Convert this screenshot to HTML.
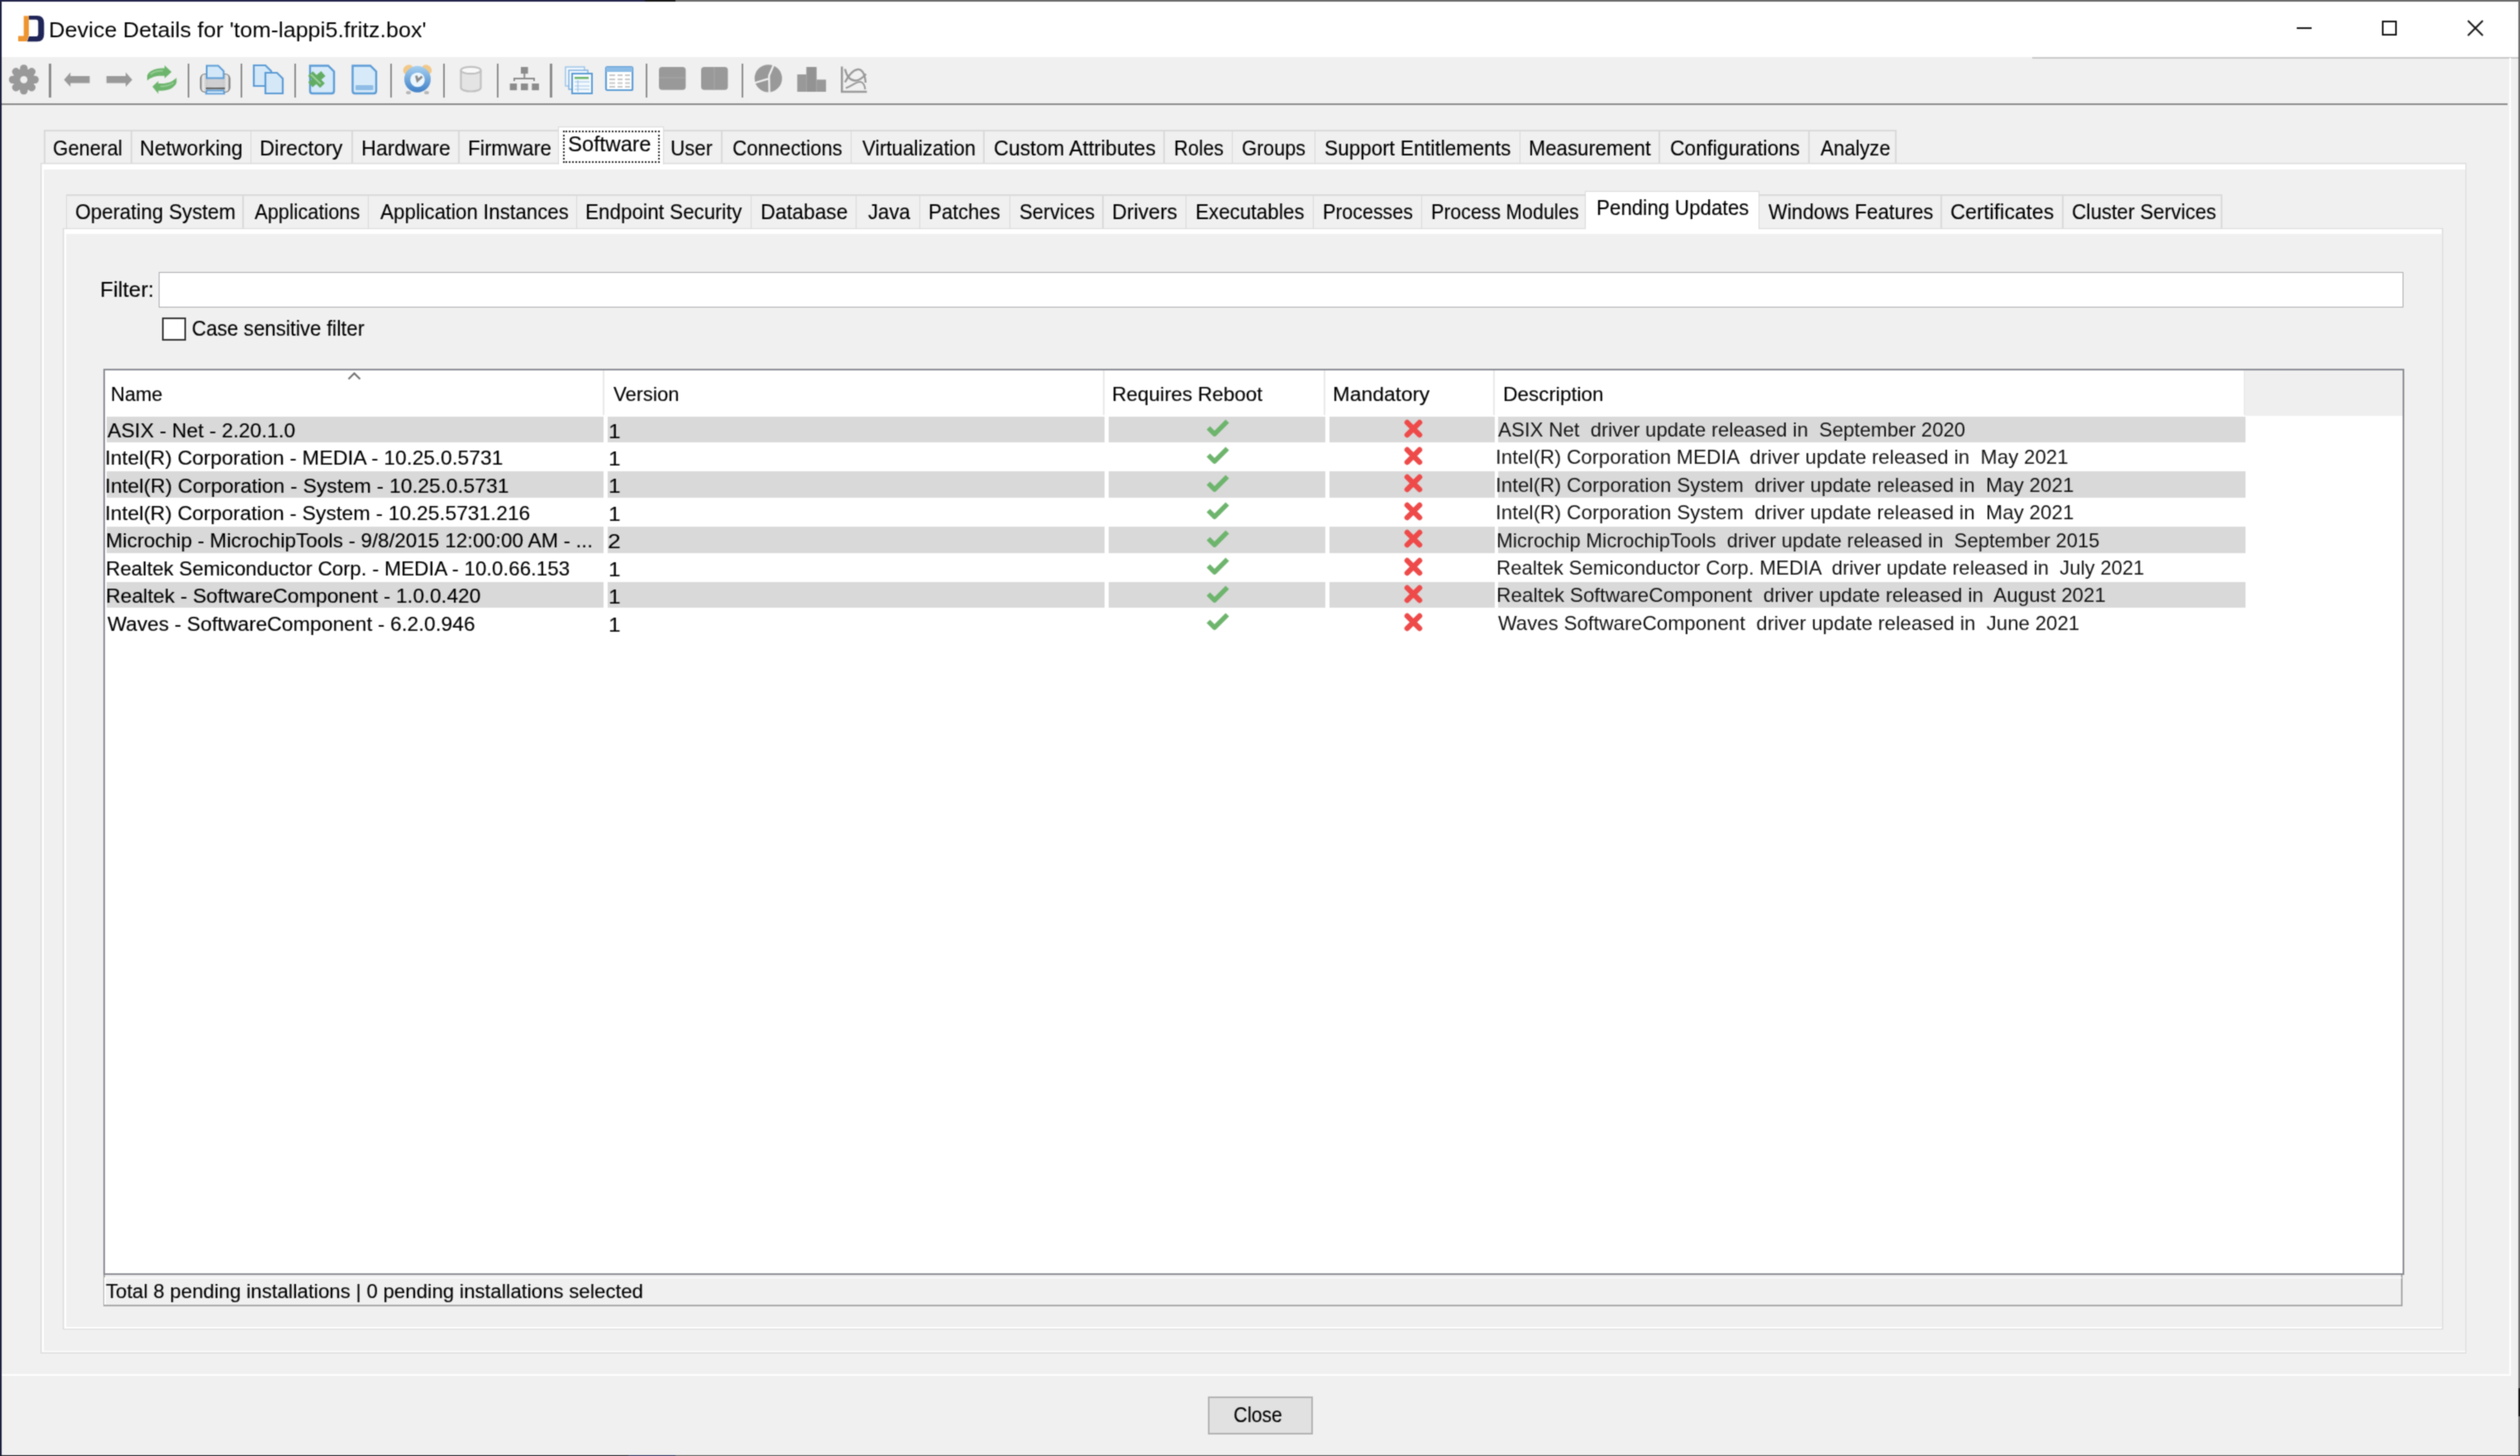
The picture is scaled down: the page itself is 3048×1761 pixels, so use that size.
<!DOCTYPE html>
<html><head><meta charset="utf-8"><style>
#w{position:absolute;left:0;top:0;width:3048px;height:1761px;overflow:hidden;filter:url(#sb)}
html,body{margin:0;padding:0;width:3048px;height:1761px;overflow:hidden;background:#f0f0f0}
.r{position:absolute;display:block}
.t{position:absolute;white-space:pre;font-family:"Liberation Sans",sans-serif;transform-origin:0 0;-webkit-text-stroke:0.15px currentColor}
.d{-webkit-text-stroke:0}
</style></head><body><svg width="0" height="0" style="position:absolute;left:0;top:0"><filter id="sb" x="0" y="0" width="100%" height="100%" color-interpolation-filters="sRGB"><feConvolveMatrix order="3" kernelMatrix="1 3 1 3 9 3 1 3 1" divisor="25" edgeMode="duplicate"/></filter></svg><div id="w">
<div class="r" style="left:0px;top:0px;width:3048px;height:1761px;background:#f0f0f0;"></div>
<div class="r" style="left:0px;top:0px;width:3048px;height:69px;background:#ffffff;"></div>
<svg class="r" style="left:20px;top:17px" width="36" height="36" viewBox="20 17 36 36">
<path d="M28.7 19.3 H34.9 V42.5 L32.6 50 H22 V43.5 H28.7 Z" fill="#ee9530"/>
<path d="M35 19.1 H45 Q53.3 19.1 53.3 28 V41.5 Q53.3 50.3 45 50.3 H32.9 L35 44.1 H43.5 Q46.2 44.1 46.2 41 V27 Q46.2 23.7 43.5 23.7 H35 Z" fill="#1f2557"/>
</svg>
<div class="t d" style="left:58.71px;top:22.87px;font-size:26.5px;line-height:26.5px;transform:scaleX(1.0168);color:#000;">Device Details for 'tom-lappi5.fritz.box'</div>
<div class="r" style="left:2778px;top:33px;width:18px;height:2px;background:#111;"></div>
<div class="r" style="left:2881px;top:25px;width:14px;height:14px;border:2px solid #111"></div>
<svg class="r" style="left:2983px;top:23px" width="22" height="22" viewBox="0 0 22 22"><path d="M2 2 L20 20 M20 2 L2 20" stroke="#111" stroke-width="2"/></svg>
<div class="r" style="left:2458px;top:69px;width:588px;height:1.5px;background:#c8c8c8;"></div>
<div class="r" style="left:2px;top:125px;width:3031px;height:2px;background:#8a8a8a;"></div>
<div class="r" style="left:3035px;top:70px;width:2px;height:1594px;background:#ffffff;"></div>
<div class="r" style="left:2px;top:1662px;width:3035px;height:2px;background:#ffffff;"></div>
<div class="r" style="left:0px;top:0px;width:2px;height:1761px;background:#1e2040;"></div>
<div class="r" style="left:0px;top:0px;width:780px;height:1.8px;background:#22244a;"></div>
<div class="r" style="left:780px;top:0px;width:37px;height:1.8px;background:#151515;"></div>
<div class="r" style="left:817px;top:0px;width:2231px;height:1.8px;background:#6a6a6a;"></div>
<div class="r" style="left:3046px;top:0px;width:2px;height:1761px;background:#6e6e6e;"></div>
<div class="r" style="left:3046px;top:1679px;width:2px;height:34px;background:#151515;"></div>
<div class="r" style="left:0px;top:1759.5px;width:760px;height:1.5px;background:#1c1c24;"></div>
<div class="r" style="left:760px;top:1759.5px;width:57px;height:1.5px;background:#2a2d5a;"></div>
<div class="r" style="left:817px;top:1759.5px;width:2231px;height:1.5px;background:#5a5a5a;"></div>
<div class="r" style="left:59.45px;top:76.5px;width:2.5px;height:41.5px;background:#8c8c8c;"></div>
<div class="r" style="left:226.55px;top:76.5px;width:2.5px;height:41.5px;background:#8c8c8c;"></div>
<div class="r" style="left:290.75px;top:76.5px;width:2.5px;height:41.5px;background:#8c8c8c;"></div>
<div class="r" style="left:355.75px;top:76.5px;width:2.5px;height:41.5px;background:#8c8c8c;"></div>
<div class="r" style="left:471.55px;top:76.5px;width:2.5px;height:41.5px;background:#8c8c8c;"></div>
<div class="r" style="left:535.85px;top:76.5px;width:2.5px;height:41.5px;background:#8c8c8c;"></div>
<div class="r" style="left:600.75px;top:76.5px;width:2.5px;height:41.5px;background:#8c8c8c;"></div>
<div class="r" style="left:665.25px;top:76.5px;width:2.5px;height:41.5px;background:#8c8c8c;"></div>
<div class="r" style="left:780.85px;top:76.5px;width:2.5px;height:41.5px;background:#8c8c8c;"></div>
<div class="r" style="left:896.65px;top:76.5px;width:2.5px;height:41.5px;background:#8c8c8c;"></div>
<svg class="r" style="left:10px;top:78px" width="38" height="38" viewBox="0 0 38 38"><g transform="translate(18.8,18.3)"><rect x="-4.6" y="-18" width="9.2" height="10" rx="4.2" transform="rotate(0)" fill="#999999"/><rect x="-4.6" y="-18" width="9.2" height="10" rx="4.2" transform="rotate(45)" fill="#999999"/><rect x="-4.6" y="-18" width="9.2" height="10" rx="4.2" transform="rotate(90)" fill="#999999"/><rect x="-4.6" y="-18" width="9.2" height="10" rx="4.2" transform="rotate(135)" fill="#999999"/><rect x="-4.6" y="-18" width="9.2" height="10" rx="4.2" transform="rotate(180)" fill="#999999"/><rect x="-4.6" y="-18" width="9.2" height="10" rx="4.2" transform="rotate(225)" fill="#999999"/><rect x="-4.6" y="-18" width="9.2" height="10" rx="4.2" transform="rotate(270)" fill="#999999"/><rect x="-4.6" y="-18" width="9.2" height="10" rx="4.2" transform="rotate(315)" fill="#999999"/><circle r="13.2" fill="#999999"/><circle r="4.4" fill="#f0f0f0"/></g></svg>
<svg class="r" style="left:76px;top:86px" width="34" height="21" viewBox="0 0 34 21"><path d="M1.4 10.4 L9.2 1.4 V6 H32.5 V14.5 H9.2 V19 Z" fill="#999999"/></svg>
<svg class="r" style="left:127px;top:86px" width="34" height="21" viewBox="0 0 34 21"><path d="M33 10.4 L25 1.4 V6 H1.8 V14.5 H25 V19 Z" fill="#999999"/></svg>
<svg class="r" style="left:172px;top:74px" width="50" height="44" viewBox="172 74 50 44">
<path d="M178 97.5 L178 91.5 C180 86 187 82.5 196 82.5 H199 V79 L207.5 87 L199 94.8 V91.8 H195 C188 91.8 183 93.5 178 97.5 Z" fill="#6db56d"/>
<path d="M213.5 94 L213.5 100 C211 106 204 109.8 195 109.8 H191.5 V113.5 L184.3 104.8 L191.5 98 V101 H196 C203 101 208 99 213.5 94 Z" fill="#6db56d"/>
<path d="M182 90 C185 87 190 85.5 197 85.5" stroke="#93cc93" stroke-width="1.8" fill="none"/>
<path d="M194 104.5 C201 104.5 206 103 210 100" stroke="#93cc93" stroke-width="1.8" fill="none"/>
</svg>
<svg class="r" style="left:236px;top:74px" width="50" height="44" viewBox="236 74 50 44">
<defs><linearGradient id="pg" x1="0" x2="1" y1="0" y2="0">
<stop offset="0" stop-color="#8a8a8a"/><stop offset="0.08" stop-color="#eeeeee"/><stop offset="0.2" stop-color="#c9c9c9"/>
<stop offset="0.5" stop-color="#dedede"/><stop offset="0.8" stop-color="#c9c9c9"/><stop offset="0.92" stop-color="#eeeeee"/><stop offset="1" stop-color="#6a6a6a"/></linearGradient></defs>
<rect x="242.5" y="89.5" width="35.5" height="22" rx="5.5" fill="url(#pg)" stroke="#777" stroke-width="1.2"/>
<rect x="252" y="96" width="17" height="9" fill="#cfcfd2"/>
<path d="M249 106.8 H272" stroke="#555" stroke-width="1.8"/>
<path d="M250 79.5 H264 L270.5 86 V94.5 H250 Z" fill="#d2e8f8" stroke="#5b9bd5" stroke-width="2"/>
<path d="M250 109.5 H270.5 L271.3 113.3 H249.2 Z" fill="#dcedfa" stroke="#5b9bd5" stroke-width="1.8"/>
</svg>
<svg class="r" style="left:305px;top:77px" width="40" height="39" viewBox="0 0 40 39">
<path d="M2 2 H16 L23 9 V27 H2 Z" fill="#d4e8f8" stroke="#5b9bd5" stroke-width="2.2"/>
<path d="M16 11 H30 L37 18 V36 H16 Z" fill="#d4e8f8" stroke="#5b9bd5" stroke-width="2.2"/>
</svg>
<svg class="r" style="left:366px;top:74px" width="46" height="44" viewBox="366 74 46 44">
<path d="M375 79.5 H397 L404 86.5 V110 Q404 113 401 113 H378 Q375 113 375 110 Z" fill="#d6eaf9" stroke="#5b9bd5" stroke-width="2.4"/>
<path d="M375.5 89 L390 103.5 M391 89 L375.5 102.5" stroke="#62ad62" stroke-width="8"/>
<path d="M376 90 L388 101.5" stroke="#9fd09f" stroke-width="2"/>
</svg>
<svg class="r" style="left:420px;top:74px" width="40" height="44" viewBox="420 74 40 44">
<path d="M426.5 79.5 H448 L455 86.5 V110 Q455 113 452 113 H429.5 Q426.5 113 426.5 110 Z" fill="#d6eaf9" stroke="#5b9bd5" stroke-width="2.4"/>
<rect x="430" y="103" width="21.5" height="6" rx="1" fill="#8fbde6"/>
</svg>
<svg class="r" style="left:482px;top:74px" width="46" height="44" viewBox="482 74 46 44">
<defs><linearGradient id="cg" x1="0" x2="0" y1="0" y2="1"><stop offset="0" stop-color="#a6d0f0"/><stop offset="1" stop-color="#3f7fc6"/></linearGradient></defs>
<ellipse cx="493.5" cy="84" rx="6.5" ry="5.2" fill="#f2c888" transform="rotate(-40 493.5 84)"/>
<ellipse cx="516.3" cy="84" rx="6.5" ry="5.2" fill="#f2c888" transform="rotate(40 516.3 84)"/>
<ellipse cx="494" cy="112" rx="3" ry="2" fill="#b8b8b8"/>
<ellipse cx="516" cy="112" rx="3" ry="2" fill="#b8b8b8"/>
<circle cx="505" cy="95.8" r="16" fill="url(#cg)"/>
<circle cx="505" cy="96.5" r="8.8" fill="#ecf7fd"/>
<path d="M503.5 91.5 L505 97.5 L510.5 92.5" stroke="#8a8a8a" stroke-width="3" fill="none"/>
</svg>
<svg class="r" style="left:555px;top:79px" width="30" height="35" viewBox="0 0 30 35">
<path d="M2.5 6 V27 C2.5 33 26.5 33 26.5 27 V6" fill="#e4e4e4" stroke="#c0c0c0" stroke-width="2.2"/>
<ellipse cx="14.5" cy="6" rx="12" ry="4.2" fill="#f8f8f8" stroke="#c0c0c0" stroke-width="2.2"/>
</svg>
<svg class="r" style="left:614px;top:79px" width="40" height="33" viewBox="0 0 40 33">
<rect x="16" y="2" width="8.6" height="8.1" fill="#8c8c8c"/>
<rect x="19.3" y="10" width="2" height="6" fill="#8c8c8c"/>
<rect x="7" y="15" width="26" height="2" fill="#8c8c8c"/>
<rect x="7" y="15" width="2" height="4" fill="#8c8c8c"/>
<rect x="31" y="15" width="2" height="4" fill="#8c8c8c"/>
<rect x="2.7" y="22" width="8.5" height="8.1" fill="#8c8c8c"/>
<rect x="16" y="22" width="8.6" height="8.1" fill="#8c8c8c"/>
<rect x="29.3" y="22" width="8.6" height="8.1" fill="#8c8c8c"/>
</svg>
<svg class="r" style="left:682px;top:79px" width="38" height="37" viewBox="0 0 38 37">
<rect x="2" y="2" width="23" height="23" fill="#f4f9fd" stroke="#9cc4e8" stroke-width="1.5"/>
<rect x="6" y="6" width="23" height="23" fill="#f4f9fd" stroke="#7fb0e0" stroke-width="1.5"/>
<rect x="10" y="10" width="24" height="24" fill="#f4f9fd" stroke="#5b9bd5" stroke-width="2"/>
<rect x="13" y="14" width="17" height="2.5" fill="#6ab46a"/>
<path d="M13 20 H31 M13 25 H31 M13 29 H31 M17 18 V32" stroke="#9cc4e8" stroke-width="1.2"/>
</svg>
<svg class="r" style="left:731px;top:79px" width="36" height="33" viewBox="0 0 36 33">
<rect x="2" y="2" width="32" height="28" rx="1.5" fill="#ffffff" stroke="#5b9bd5" stroke-width="2.2"/>
<rect x="2" y="2" width="32" height="6" fill="#8cbce6"/>
<path d="M6 12 H13 M16 12 H22 M25 12 H31 M6 17 H13 M16 17 H22 M25 17 H31 M6 21.5 H13 M16 21.5 H22 M25 21.5 H31 M6 26 H13 M16 26 H22 M25 26 H31" stroke="#c8c8c8" stroke-width="2"/>
</svg>
<svg class="r" style="left:796px;top:80px" width="35" height="30" viewBox="0 0 35 30"><rect x="1" y="1" width="32.4" height="27.7" rx="4" fill="#999999"/><path d="M1 14 H33" stroke="#a8a8a8" stroke-width="1"/></svg>
<svg class="r" style="left:847px;top:80px" width="35" height="30" viewBox="0 0 35 30"><rect x="1" y="1" width="32.4" height="27.7" rx="4" fill="#999999"/><path d="M17 1 V29" stroke="#a8a8a8" stroke-width="1"/></svg>
<svg class="r" style="left:906px;top:74px" width="46" height="44" viewBox="906 74 46 44">
<circle cx="929.3" cy="94.8" r="16.6" fill="#999999"/>
<path d="M936 78 L930.2 91.5 L930.6 112 M929 95.3 L912 100.5" stroke="#f0f0f0" stroke-width="2.3" fill="none"/>
</svg>
<svg class="r" style="left:962px;top:79px" width="40" height="34" viewBox="0 0 40 34">
<rect x="2.3" y="11" width="11" height="21" fill="#999999"/>
<rect x="13.3" y="2" width="12.4" height="30" fill="#939393"/>
<rect x="25.7" y="17.3" width="11.4" height="14.7" fill="#999999"/>
</svg>
<svg class="r" style="left:1010px;top:74px" width="46" height="44" viewBox="1010 74 46 44">
<path d="M1018.3 80.5 V111 H1048.5" stroke="#999999" stroke-width="2.6" fill="none"/>
<path d="M1022 83.5 C1024 92 1028 97 1034 97.5 C1040 98 1044 93 1047.5 89.5" stroke="#999999" stroke-width="2.4" fill="none"/>
<path d="M1022 99.5 C1026 92 1031 85 1037 84 C1042 83 1046 88 1047 100" stroke="#999999" stroke-width="2.4" fill="none"/>
<path d="M1023 106.5 C1030 104.5 1035 99 1040 99 C1044 99 1046 104 1046.5 108" stroke="#999999" stroke-width="2.2" fill="none"/>
</svg>
<div class="r" style="left:49px;top:197px;width:2934px;height:1439.5px;background:#f0f0f0;border:1.5px solid #d9d9d9;box-sizing:border-box"></div>
<div class="r" style="left:50.5px;top:198.5px;width:2931.0px;height:6.5px;background:#ffffff;"></div>
<div class="r" style="left:50.5px;top:198.5px;width:2.5px;height:1436.5px;background:#ffffff;"></div>
<div class="r" style="left:50.5px;top:1633.5px;width:2931.0px;height:1.5px;background:#ffffff;"></div>
<div class="r" style="left:54px;top:157px;width:2240px;height:1.5px;background:#d9d9d9;"></div>
<div class="r" style="left:53.25px;top:157px;width:1.5px;height:40px;background:#d9d9d9;"></div>
<div class="r" style="left:158.05px;top:157px;width:1.5px;height:40px;background:#d9d9d9;"></div>
<div class="r" style="left:302.75px;top:157px;width:1.5px;height:40px;background:#d9d9d9;"></div>
<div class="r" style="left:425.25px;top:157px;width:1.5px;height:40px;background:#d9d9d9;"></div>
<div class="r" style="left:554.25px;top:157px;width:1.5px;height:40px;background:#d9d9d9;"></div>
<div class="r" style="left:674.85px;top:157px;width:1.5px;height:40px;background:#d9d9d9;"></div>
<div class="r" style="left:801.25px;top:157px;width:1.5px;height:40px;background:#d9d9d9;"></div>
<div class="r" style="left:872.25px;top:157px;width:1.5px;height:40px;background:#d9d9d9;"></div>
<div class="r" style="left:1028.85px;top:157px;width:1.5px;height:40px;background:#d9d9d9;"></div>
<div class="r" style="left:1189.25px;top:157px;width:1.5px;height:40px;background:#d9d9d9;"></div>
<div class="r" style="left:1407.25px;top:157px;width:1.5px;height:40px;background:#d9d9d9;"></div>
<div class="r" style="left:1489.65px;top:157px;width:1.5px;height:40px;background:#d9d9d9;"></div>
<div class="r" style="left:1589.65px;top:157px;width:1.5px;height:40px;background:#d9d9d9;"></div>
<div class="r" style="left:1837.85px;top:157px;width:1.5px;height:40px;background:#d9d9d9;"></div>
<div class="r" style="left:2006.25px;top:157px;width:1.5px;height:40px;background:#d9d9d9;"></div>
<div class="r" style="left:2187.25px;top:157px;width:1.5px;height:40px;background:#d9d9d9;"></div>
<div class="r" style="left:2292.25px;top:157px;width:1.5px;height:40px;background:#d9d9d9;"></div>
<div class="r" style="left:675px;top:152.5px;width:128px;height:46.0px;background:#ffffff;border:1.5px solid #d9d9d9;border-bottom:none;box-sizing:border-box"></div>
<div class="r" style="left:676.5px;top:197px;width:125.0px;height:8px;background:#ffffff;"></div>
<div class="r" style="left:680.5px;top:158px;width:117px;height:38.5px;border:2px dotted #222;box-sizing:border-box"></div>
<div class="t" style="left:63.86px;top:166.09px;font-size:26px;line-height:26px;transform:scaleX(0.9095);color:#000;">General</div>
<div class="t" style="left:169.08px;top:166.09px;font-size:26px;line-height:26px;transform:scaleX(0.9584);color:#000;">Networking</div>
<div class="t" style="left:314.27px;top:166.09px;font-size:26px;line-height:26px;transform:scaleX(0.9647);color:#000;">Directory</div>
<div class="t" style="left:436.79px;top:166.09px;font-size:26px;line-height:26px;transform:scaleX(0.9571);color:#000;">Hardware</div>
<div class="t" style="left:565.74px;top:166.09px;font-size:26px;line-height:26px;transform:scaleX(0.9321);color:#000;">Firmware</div>
<div class="t" style="left:810.65px;top:166.09px;font-size:26px;line-height:26px;transform:scaleX(0.9238);color:#000;">User</div>
<div class="t" style="left:885.85px;top:166.09px;font-size:26px;line-height:26px;transform:scaleX(0.9188);color:#000;">Connections</div>
<div class="t" style="left:1042.77px;top:166.09px;font-size:26px;line-height:26px;transform:scaleX(0.9242);color:#000;">Virtualization</div>
<div class="t" style="left:1201.81px;top:166.09px;font-size:26px;line-height:26px;transform:scaleX(0.9542);color:#000;">Custom Attributes</div>
<div class="t" style="left:1419.60px;top:166.09px;font-size:26px;line-height:26px;transform:scaleX(0.9008);color:#000;">Roles</div>
<div class="t" style="left:1502.47px;top:166.09px;font-size:26px;line-height:26px;transform:scaleX(0.9036);color:#000;">Groups</div>
<div class="t" style="left:1602.43px;top:166.09px;font-size:26px;line-height:26px;transform:scaleX(0.9339);color:#000;">Support Entitlements</div>
<div class="t" style="left:1848.84px;top:166.09px;font-size:26px;line-height:26px;transform:scaleX(0.9295);color:#000;">Measurement</div>
<div class="t" style="left:2019.53px;top:166.09px;font-size:26px;line-height:26px;transform:scaleX(0.9366);color:#000;">Configurations</div>
<div class="t" style="left:2201.80px;top:166.09px;font-size:26px;line-height:26px;transform:scaleX(0.9118);color:#000;">Analyze</div>
<div class="t" style="left:687.28px;top:161.09px;font-size:26px;line-height:26px;transform:scaleX(0.9796);color:#000;">Software</div>
<div class="r" style="left:76px;top:275.5px;width:2878.5px;height:1332.5px;background:#f0f0f0;border:1.5px solid #d9d9d9;box-sizing:border-box"></div>
<div class="r" style="left:77.5px;top:277px;width:2875.5px;height:6px;background:#ffffff;"></div>
<div class="r" style="left:77.5px;top:277px;width:2.299999999999997px;height:1329.5px;background:#ffffff;"></div>
<div class="r" style="left:77.5px;top:1604.5px;width:2875.5px;height:2.0px;background:#ffffff;"></div>
<div class="r" style="left:80.7px;top:235px;width:2607.3px;height:1.5px;background:#d9d9d9;"></div>
<div class="r" style="left:79.95px;top:235px;width:1.5px;height:40.5px;background:#d9d9d9;"></div>
<div class="r" style="left:293.25px;top:235px;width:1.5px;height:40.5px;background:#d9d9d9;"></div>
<div class="r" style="left:444.95px;top:235px;width:1.5px;height:40.5px;background:#d9d9d9;"></div>
<div class="r" style="left:696.75px;top:235px;width:1.5px;height:40.5px;background:#d9d9d9;"></div>
<div class="r" style="left:907.75px;top:235px;width:1.5px;height:40.5px;background:#d9d9d9;"></div>
<div class="r" style="left:1034.95px;top:235px;width:1.5px;height:40.5px;background:#d9d9d9;"></div>
<div class="r" style="left:1111.75px;top:235px;width:1.5px;height:40.5px;background:#d9d9d9;"></div>
<div class="r" style="left:1220.65px;top:235px;width:1.5px;height:40.5px;background:#d9d9d9;"></div>
<div class="r" style="left:1333.25px;top:235px;width:1.5px;height:40.5px;background:#d9d9d9;"></div>
<div class="r" style="left:1433.85px;top:235px;width:1.5px;height:40.5px;background:#d9d9d9;"></div>
<div class="r" style="left:1587.85px;top:235px;width:1.5px;height:40.5px;background:#d9d9d9;"></div>
<div class="r" style="left:1718.95px;top:235px;width:1.5px;height:40.5px;background:#d9d9d9;"></div>
<div class="r" style="left:1917.25px;top:235px;width:1.5px;height:40.5px;background:#d9d9d9;"></div>
<div class="r" style="left:2126.75px;top:235px;width:1.5px;height:40.5px;background:#d9d9d9;"></div>
<div class="r" style="left:2347.25px;top:235px;width:1.5px;height:40.5px;background:#d9d9d9;"></div>
<div class="r" style="left:2494.05px;top:235px;width:1.5px;height:40.5px;background:#d9d9d9;"></div>
<div class="r" style="left:2686.25px;top:235px;width:1.5px;height:40.5px;background:#d9d9d9;"></div>
<div class="r" style="left:1917.2px;top:230.5px;width:211.29999999999995px;height:46.5px;background:#ffffff;border:1.8px solid #d9d9d9;border-bottom:none;box-sizing:border-box"></div>
<div class="r" style="left:1919px;top:275px;width:207.69999999999982px;height:8px;background:#ffffff;"></div>
<div class="t" style="left:90.81px;top:243.71px;font-size:25.5px;line-height:25.5px;transform:scaleX(0.9502);color:#000;">Operating System</div>
<div class="t" style="left:308.00px;top:243.71px;font-size:25.5px;line-height:25.5px;transform:scaleX(0.9253);color:#000;">Applications</div>
<div class="t" style="left:460.00px;top:243.71px;font-size:25.5px;line-height:25.5px;transform:scaleX(0.9450);color:#000;">Application Instances</div>
<div class="t" style="left:708.11px;top:243.71px;font-size:25.5px;line-height:25.5px;transform:scaleX(0.9470);color:#000;">Endpoint Security</div>
<div class="t" style="left:920.07px;top:243.71px;font-size:25.5px;line-height:25.5px;transform:scaleX(0.9651);color:#000;">Database</div>
<div class="t" style="left:1049.53px;top:243.71px;font-size:25.5px;line-height:25.5px;transform:scaleX(0.9477);color:#000;">Java</div>
<div class="t" style="left:1123.12px;top:243.71px;font-size:25.5px;line-height:25.5px;transform:scaleX(0.9412);color:#000;">Patches</div>
<div class="t" style="left:1232.84px;top:243.71px;font-size:25.5px;line-height:25.5px;transform:scaleX(0.9319);color:#000;">Services</div>
<div class="t" style="left:1345.05px;top:243.71px;font-size:25.5px;line-height:25.5px;transform:scaleX(0.9775);color:#000;">Drivers</div>
<div class="t" style="left:1446.11px;top:243.71px;font-size:25.5px;line-height:25.5px;transform:scaleX(0.9471);color:#000;">Executables</div>
<div class="t" style="left:1599.97px;top:243.71px;font-size:25.5px;line-height:25.5px;transform:scaleX(0.9147);color:#000;">Processes</div>
<div class="t" style="left:1730.67px;top:243.71px;font-size:25.5px;line-height:25.5px;transform:scaleX(0.9132);color:#000;">Process Modules</div>
<div class="t" style="left:2138.50px;top:243.71px;font-size:25.5px;line-height:25.5px;transform:scaleX(0.9441);color:#000;">Windows Features</div>
<div class="t" style="left:2359.47px;top:243.71px;font-size:25.5px;line-height:25.5px;transform:scaleX(0.9820);color:#000;">Certificates</div>
<div class="t" style="left:2506.32px;top:243.71px;font-size:25.5px;line-height:25.5px;transform:scaleX(0.9401);color:#000;">Cluster Services</div>
<div class="t" style="left:1930.82px;top:239.11px;font-size:25.5px;line-height:25.5px;transform:scaleX(0.9422);color:#000;">Pending Updates</div>
<div class="t" style="left:121.29px;top:337.19px;font-size:26px;line-height:26px;transform:scaleX(1.0058);color:#000;">Filter:</div>
<div class="r" style="left:191.5px;top:328.5px;width:2715.5px;height:43.0px;background:#ffffff;border:1.6px solid #a9a9ae;box-sizing:border-box"></div>
<div class="r" style="left:195.5px;top:383.5px;width:29.0px;height:28.5px;background:#ffffff;border:2.2px solid #333;box-sizing:border-box"></div>
<div class="t" style="left:231.74px;top:383.99px;font-size:26px;line-height:26px;transform:scaleX(0.9256);color:#000;">Case sensitive filter</div>
<div class="r" style="left:124.5px;top:446px;width:2783.0px;height:1096.2px;background:#ffffff;border:2px solid #8a8c94;box-sizing:border-box"></div>
<div class="r" style="left:2714.5px;top:448px;width:191.0px;height:54.5px;background:#efeff0;"></div>
<div class="r" style="left:728.6px;top:448px;width:2.0px;height:54px;background:#e8e8e8;"></div>
<div class="r" style="left:1333.7px;top:448px;width:2.0px;height:54px;background:#e8e8e8;"></div>
<div class="r" style="left:1601px;top:448px;width:2px;height:54px;background:#e8e8e8;"></div>
<div class="r" style="left:1806.2px;top:448px;width:2.0px;height:54px;background:#e8e8e8;"></div>
<div class="r" style="left:2713.5px;top:448px;width:1.0px;height:54px;background:#e4e4e4;"></div>
<svg class="r" style="left:417px;top:448px" width="24" height="16" viewBox="0 0 24 16"><path d="M4.5 10.5 L11.5 3.5 L18.5 10.5" stroke="#707070" stroke-width="2.2" fill="none"/></svg>
<div class="t" style="left:134.49px;top:465.06px;font-size:24.5px;line-height:24.5px;transform:scaleX(0.9574);color:#000;">Name</div>
<div class="t" style="left:742.26px;top:465.06px;font-size:24.5px;line-height:24.5px;transform:scaleX(0.9718);color:#000;">Version</div>
<div class="t" style="left:1345.22px;top:465.26px;font-size:24.5px;line-height:24.5px;transform:scaleX(0.9904);color:#000;">Requires Reboot</div>
<div class="t" style="left:1612.48px;top:465.26px;font-size:24.5px;line-height:24.5px;transform:scaleX(1.0119);color:#000;">Mandatory</div>
<div class="t" style="left:1817.52px;top:465.26px;font-size:24.5px;line-height:24.5px;transform:scaleX(0.9924);color:#000;">Description</div>
<div class="r" style="left:129.3px;top:503.5px;width:600.7px;height:31.299999999999955px;background:#d9d9d9;"></div>
<div class="r" style="left:734.5px;top:503.5px;width:601.2px;height:31.299999999999955px;background:#d9d9d9;"></div>
<div class="r" style="left:1340.7px;top:503.5px;width:262.29999999999995px;height:31.299999999999955px;background:#d9d9d9;"></div>
<div class="r" style="left:1607.5px;top:503.5px;width:200.0999999999999px;height:31.299999999999955px;background:#d9d9d9;"></div>
<div class="r" style="left:1812px;top:503.5px;width:904.4000000000001px;height:31.299999999999955px;background:#d9d9d9;"></div>
<div class="t" style="left:129.70px;top:508.76px;font-size:24.5px;line-height:24.5px;transform:scaleX(1.0055);color:#000;">ASIX - Net - 2.20.1.0</div>
<div class="t" style="left:736.43px;top:509.56px;font-size:24.5px;line-height:24.5px;transform:scaleX(1.0698);color:#000;">1</div>
<svg class="r" style="left:1459px;top:506.0px" width="28" height="22" viewBox="0 0 28 22"><path d="M2.5 11.5 L10 19 L25.5 3.5" stroke="#6db46d" stroke-width="5.8" fill="none" stroke-linejoin="round"/></svg>
<svg class="r" style="left:1697.5px;top:506.5px" width="23" height="23" viewBox="0 0 23 23"><path d="M4 4 L19 19 M19 4 L4 19" stroke="#ee4a4a" stroke-width="6.5" stroke-linecap="round" fill="none"/></svg>
<div class="t d" style="left:1811.70px;top:507.88px;font-size:24px;line-height:24px;transform:scaleX(0.9966);color:#141414;">ASIX Net  driver update released in  September 2020</div>
<div class="t" style="left:127.43px;top:542.19px;font-size:24.5px;line-height:24.5px;transform:scaleX(1.0072);color:#000;">Intel(R) Corporation - MEDIA - 10.25.0.5731</div>
<div class="t" style="left:736.43px;top:542.99px;font-size:24.5px;line-height:24.5px;transform:scaleX(1.0698);color:#000;">1</div>
<svg class="r" style="left:1459px;top:539.43px" width="28" height="22" viewBox="0 0 28 22"><path d="M2.5 11.5 L10 19 L25.5 3.5" stroke="#6db46d" stroke-width="5.8" fill="none" stroke-linejoin="round"/></svg>
<svg class="r" style="left:1697.5px;top:539.93px" width="23" height="23" viewBox="0 0 23 23"><path d="M4 4 L19 19 M19 4 L4 19" stroke="#ee4a4a" stroke-width="6.5" stroke-linecap="round" fill="none"/></svg>
<div class="t d" style="left:1809.44px;top:541.31px;font-size:24px;line-height:24px;transform:scaleX(1.0063);color:#141414;">Intel(R) Corporation MEDIA  driver update released in  May 2021</div>
<div class="r" style="left:129.3px;top:570.36px;width:600.7px;height:31.299999999999955px;background:#d9d9d9;"></div>
<div class="r" style="left:734.5px;top:570.36px;width:601.2px;height:31.299999999999955px;background:#d9d9d9;"></div>
<div class="r" style="left:1340.7px;top:570.36px;width:262.29999999999995px;height:31.299999999999955px;background:#d9d9d9;"></div>
<div class="r" style="left:1607.5px;top:570.36px;width:200.0999999999999px;height:31.299999999999955px;background:#d9d9d9;"></div>
<div class="r" style="left:1812px;top:570.36px;width:904.4000000000001px;height:31.299999999999955px;background:#d9d9d9;"></div>
<div class="t" style="left:127.43px;top:575.62px;font-size:24.5px;line-height:24.5px;transform:scaleX(1.0104);color:#000;">Intel(R) Corporation - System - 10.25.0.5731</div>
<div class="t" style="left:736.43px;top:576.42px;font-size:24.5px;line-height:24.5px;transform:scaleX(1.0698);color:#000;">1</div>
<svg class="r" style="left:1459px;top:572.86px" width="28" height="22" viewBox="0 0 28 22"><path d="M2.5 11.5 L10 19 L25.5 3.5" stroke="#6db46d" stroke-width="5.8" fill="none" stroke-linejoin="round"/></svg>
<svg class="r" style="left:1697.5px;top:573.36px" width="23" height="23" viewBox="0 0 23 23"><path d="M4 4 L19 19 M19 4 L4 19" stroke="#ee4a4a" stroke-width="6.5" stroke-linecap="round" fill="none"/></svg>
<div class="t d" style="left:1809.43px;top:574.74px;font-size:24px;line-height:24px;transform:scaleX(1.0082);color:#141414;">Intel(R) Corporation System  driver update released in  May 2021</div>
<div class="t" style="left:127.43px;top:609.05px;font-size:24.5px;line-height:24.5px;transform:scaleX(1.0072);color:#000;">Intel(R) Corporation - System - 10.25.5731.216</div>
<div class="t" style="left:736.43px;top:609.85px;font-size:24.5px;line-height:24.5px;transform:scaleX(1.0698);color:#000;">1</div>
<svg class="r" style="left:1459px;top:606.29px" width="28" height="22" viewBox="0 0 28 22"><path d="M2.5 11.5 L10 19 L25.5 3.5" stroke="#6db46d" stroke-width="5.8" fill="none" stroke-linejoin="round"/></svg>
<svg class="r" style="left:1697.5px;top:606.79px" width="23" height="23" viewBox="0 0 23 23"><path d="M4 4 L19 19 M19 4 L4 19" stroke="#ee4a4a" stroke-width="6.5" stroke-linecap="round" fill="none"/></svg>
<div class="t d" style="left:1809.43px;top:608.17px;font-size:24px;line-height:24px;transform:scaleX(1.0082);color:#141414;">Intel(R) Corporation System  driver update released in  May 2021</div>
<div class="r" style="left:129.3px;top:637.22px;width:600.7px;height:31.299999999999955px;background:#d9d9d9;"></div>
<div class="r" style="left:734.5px;top:637.22px;width:601.2px;height:31.299999999999955px;background:#d9d9d9;"></div>
<div class="r" style="left:1340.7px;top:637.22px;width:262.29999999999995px;height:31.299999999999955px;background:#d9d9d9;"></div>
<div class="r" style="left:1607.5px;top:637.22px;width:200.0999999999999px;height:31.299999999999955px;background:#d9d9d9;"></div>
<div class="r" style="left:1812px;top:637.22px;width:904.4000000000001px;height:31.299999999999955px;background:#d9d9d9;"></div>
<div class="t" style="left:127.71px;top:642.48px;font-size:24.5px;line-height:24.5px;transform:scaleX(0.9942);color:#000;">Microchip - MicrochipTools - 9/8/2015 12:00:00 AM - ...</div>
<div class="t" style="left:735.36px;top:643.28px;font-size:24.5px;line-height:24.5px;transform:scaleX(1.1556);color:#000;">2</div>
<svg class="r" style="left:1459px;top:639.72px" width="28" height="22" viewBox="0 0 28 22"><path d="M2.5 11.5 L10 19 L25.5 3.5" stroke="#6db46d" stroke-width="5.8" fill="none" stroke-linejoin="round"/></svg>
<svg class="r" style="left:1697.5px;top:640.22px" width="23" height="23" viewBox="0 0 23 23"><path d="M4 4 L19 19 M19 4 L4 19" stroke="#ee4a4a" stroke-width="6.5" stroke-linecap="round" fill="none"/></svg>
<div class="t d" style="left:1809.72px;top:641.60px;font-size:24px;line-height:24px;transform:scaleX(0.9905);color:#141414;">Microchip MicrochipTools  driver update released in  September 2015</div>
<div class="t" style="left:127.73px;top:675.91px;font-size:24.5px;line-height:24.5px;transform:scaleX(0.9857);color:#000;">Realtek Semiconductor Corp. - MEDIA - 10.0.66.153</div>
<div class="t" style="left:736.43px;top:676.71px;font-size:24.5px;line-height:24.5px;transform:scaleX(1.0698);color:#000;">1</div>
<svg class="r" style="left:1459px;top:673.15px" width="28" height="22" viewBox="0 0 28 22"><path d="M2.5 11.5 L10 19 L25.5 3.5" stroke="#6db46d" stroke-width="5.8" fill="none" stroke-linejoin="round"/></svg>
<svg class="r" style="left:1697.5px;top:673.65px" width="23" height="23" viewBox="0 0 23 23"><path d="M4 4 L19 19 M19 4 L4 19" stroke="#ee4a4a" stroke-width="6.5" stroke-linecap="round" fill="none"/></svg>
<div class="t d" style="left:1809.71px;top:675.03px;font-size:24px;line-height:24px;transform:scaleX(0.9937);color:#141414;">Realtek Semiconductor Corp. MEDIA  driver update released in  July 2021</div>
<div class="r" style="left:129.3px;top:704.08px;width:600.7px;height:31.299999999999955px;background:#d9d9d9;"></div>
<div class="r" style="left:734.5px;top:704.08px;width:601.2px;height:31.299999999999955px;background:#d9d9d9;"></div>
<div class="r" style="left:1340.7px;top:704.08px;width:262.29999999999995px;height:31.299999999999955px;background:#d9d9d9;"></div>
<div class="r" style="left:1607.5px;top:704.08px;width:200.0999999999999px;height:31.299999999999955px;background:#d9d9d9;"></div>
<div class="r" style="left:1812px;top:704.08px;width:904.4000000000001px;height:31.299999999999955px;background:#d9d9d9;"></div>
<div class="t" style="left:127.69px;top:709.34px;font-size:24.5px;line-height:24.5px;transform:scaleX(1.0028);color:#000;">Realtek - SoftwareComponent - 1.0.0.420</div>
<div class="t" style="left:736.43px;top:710.14px;font-size:24.5px;line-height:24.5px;transform:scaleX(1.0698);color:#000;">1</div>
<svg class="r" style="left:1459px;top:706.58px" width="28" height="22" viewBox="0 0 28 22"><path d="M2.5 11.5 L10 19 L25.5 3.5" stroke="#6db46d" stroke-width="5.8" fill="none" stroke-linejoin="round"/></svg>
<svg class="r" style="left:1697.5px;top:707.08px" width="23" height="23" viewBox="0 0 23 23"><path d="M4 4 L19 19 M19 4 L4 19" stroke="#ee4a4a" stroke-width="6.5" stroke-linecap="round" fill="none"/></svg>
<div class="t d" style="left:1809.68px;top:708.46px;font-size:24px;line-height:24px;transform:scaleX(1.0080);color:#141414;">Realtek SoftwareComponent  driver update released in  August 2021</div>
<div class="t" style="left:129.70px;top:742.77px;font-size:24.5px;line-height:24.5px;transform:scaleX(1.0036);color:#000;">Waves - SoftwareComponent - 6.2.0.946</div>
<div class="t" style="left:736.43px;top:743.57px;font-size:24.5px;line-height:24.5px;transform:scaleX(1.0698);color:#000;">1</div>
<svg class="r" style="left:1459px;top:740.01px" width="28" height="22" viewBox="0 0 28 22"><path d="M2.5 11.5 L10 19 L25.5 3.5" stroke="#6db46d" stroke-width="5.8" fill="none" stroke-linejoin="round"/></svg>
<svg class="r" style="left:1697.5px;top:740.51px" width="23" height="23" viewBox="0 0 23 23"><path d="M4 4 L19 19 M19 4 L4 19" stroke="#ee4a4a" stroke-width="6.5" stroke-linecap="round" fill="none"/></svg>
<div class="t d" style="left:1811.70px;top:741.89px;font-size:24px;line-height:24px;transform:scaleX(1.0034);color:#141414;">Waves SoftwareComponent  driver update released in  June 2021</div>
<div class="r" style="left:124.5px;top:1542px;width:2781.5px;height:37.5px;background:#f0f0f0;border:2px solid #a9a9a9;border-top:none;box-sizing:border-box"></div>
<div class="r" style="left:126px;top:1544.5px;width:2778.5px;height:1.5px;background:#ffffff;"></div>
<div class="r" style="left:126px;top:1544.5px;width:2px;height:33.0px;background:#ffffff;"></div>
<div class="t" style="left:128.41px;top:1549.76px;font-size:24.5px;line-height:24.5px;transform:scaleX(0.9826);color:#000;">Total 8 pending installations | 0 pending installations selected</div>
<div class="r" style="left:1460.5px;top:1689px;width:127.0px;height:46px;background:#e1e1e1;border:2px solid #b2b2b2;box-sizing:border-box"></div>
<div class="t" style="left:1492.19px;top:1697.99px;font-size:26px;line-height:26px;transform:scaleX(0.8859);color:#000;">Close</div>
</div></body></html>
